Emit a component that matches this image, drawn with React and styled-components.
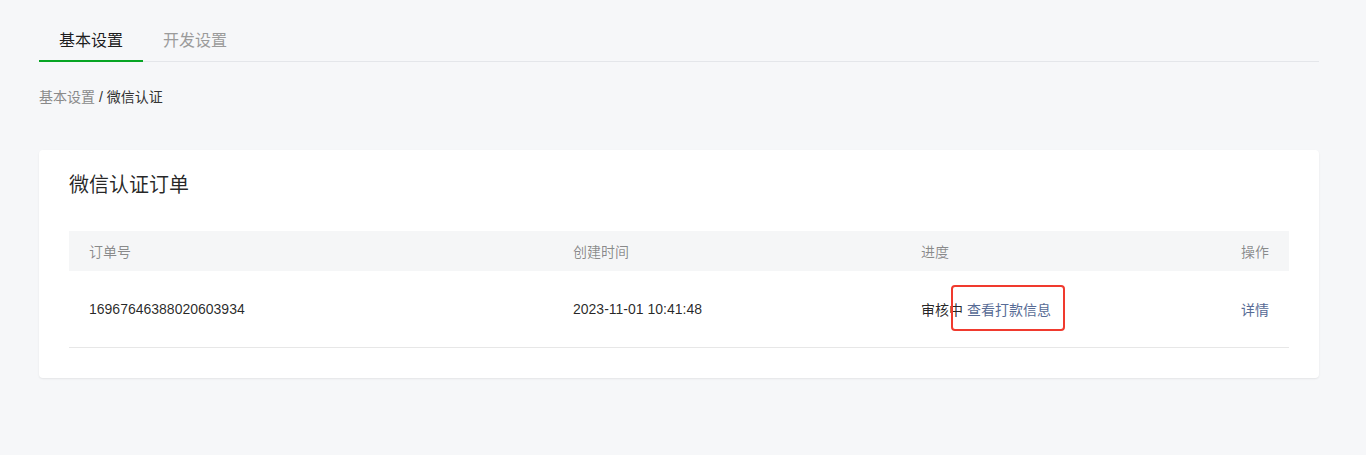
import React from 'react';
import styled, { createGlobalStyle } from 'styled-components';

const GlobalStyle = createGlobalStyle`
  body {
    margin: 0;
    padding: 0;
    background: #f6f7f9;
    font-family: 'Liberation Sans', 'Noto Sans CJK SC', sans-serif;
    color: rgba(0, 0, 0, 0.9);
  }
`;

const Page = styled.div`
  width: 1280px;
  margin-left: 39px;
  padding-top: 20px;
  padding-bottom: 40px;
`;

const Tabs = styled.div`
  display: flex;
  border-bottom: 1px solid #e4e6ea;
`;

const Tab = styled.div`
  padding: 1px 20px 0;
  height: 39px;
  line-height: 40px;
  font-size: 16px;
  color: ${(p) => (p.active ? 'rgba(0,0,0,0.9)' : '#9b9b9b')};
  border-bottom: 2px solid ${(p) => (p.active ? '#07a524' : 'transparent')};
  margin-bottom: -1px;
`;

const Breadcrumb = styled.div`
  margin-top: 25px;
  font-size: 14px;
  line-height: 20px;
  color: #333;

  & span {
    color: #8a8a8a;
  }
`;

const Card = styled.div`
  margin-top: 43px;
  background: #fff;
  border-radius: 4px;
  box-shadow: 0 1px 2px rgba(0, 0, 0, 0.08);
  padding: 21px 30px 30px;
`;

const CardTitle = styled.h2`
  margin: 0;
  font-size: 20px;
  font-weight: 400;
  line-height: 28px;
  color: rgba(0, 0, 0, 0.85);
`;

const Table = styled.div`
  margin-top: 32px;
`;

const Row = styled.div`
  display: grid;
  grid-template-columns: 484px 348px 1fr 120px;
  align-items: center;
  height: ${(p) => (p.head ? '40px' : '76px')};
  background: ${(p) => (p.head ? '#f5f6f7' : '#fff')};
  border-bottom: ${(p) => (p.head ? 'none' : '1px solid #e7e7e7')};
  font-size: 14px;
  color: ${(p) => (p.head ? 'rgba(0,0,0,0.45)' : 'rgba(0,0,0,0.85)')};
`;

const Cell = styled.div`
  padding: 0 20px;
  text-align: ${(p) => (p.right ? 'right' : 'left')};
  white-space: nowrap;
`;

const Link = styled.a`
  color: #576b95;
  text-decoration: none;
  cursor: pointer;
`;

const Marked = styled.span`
  position: relative;

  &::after {
    content: '';
    position: absolute;
    left: -16px;
    right: -14px;
    top: -17px;
    bottom: -13px;
    border: 2px solid #f03a2e;
    border-radius: 4px;
    pointer-events: none;
  }
`;

const App = () => {
  return (
    <>
      <GlobalStyle />
      <Page>
        <Tabs>
          <Tab active>基本设置</Tab>
          <Tab>开发设置</Tab>
        </Tabs>
        <Breadcrumb>
          <span>基本设置</span> / 微信认证
        </Breadcrumb>
        <Card>
          <CardTitle>微信认证订单</CardTitle>
          <Table>
            <Row head>
              <Cell>订单号</Cell>
              <Cell>创建时间</Cell>
              <Cell>进度</Cell>
              <Cell right>操作</Cell>
            </Row>
            <Row>
              <Cell>16967646388020603934</Cell>
              <Cell>2023-11-01 10:41:48</Cell>
              <Cell>
                审核中{' '}
                <Marked>
                  <Link>查看打款信息</Link>
                </Marked>
              </Cell>
              <Cell right>
                <Link>详情</Link>
              </Cell>
            </Row>
          </Table>
        </Card>
      </Page>
    </>
  );
};

export default App;
